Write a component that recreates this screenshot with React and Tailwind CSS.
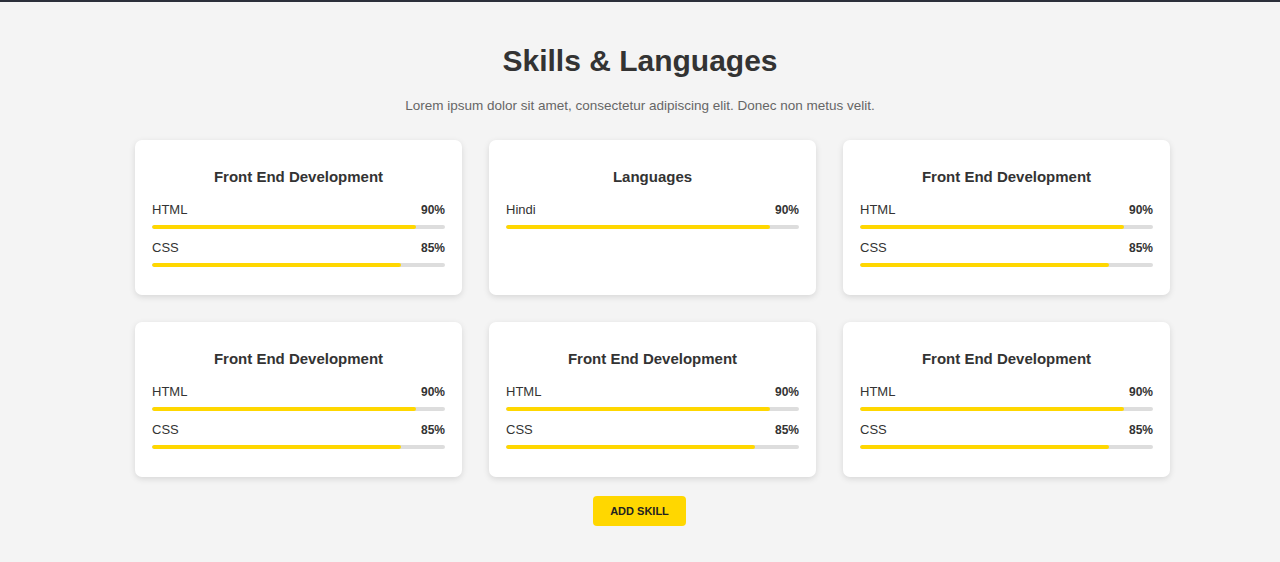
import React from "react";

const cards = [
  { title: "Front End Development", skills: [["HTML", 90], ["CSS", 85]] },
  { title: "Languages", skills: [["Hindi", 90]] },
  { title: "Front End Development", skills: [["HTML", 90], ["CSS", 85]] },
  { title: "Front End Development", skills: [["HTML", 90], ["CSS", 85]] },
  { title: "Front End Development", skills: [["HTML", 90], ["CSS", 85]] },
  { title: "Front End Development", skills: [["HTML", 90], ["CSS", 85]] },
];

function Card({ title, skills }) {
  return (
    <div className="bg-white rounded-[7px] shadow-[0_2px_6px_rgba(0,0,0,0.12)] px-[17px] pt-[27px] pb-[28px]">
      <h3 className="text-center text-[15px] leading-[20px] font-bold text-[#333] mb-[15px]">{title}</h3>
      <div className="flex flex-col gap-[11px]">
        {skills.map(([name, pct], i) => (
          <div key={i}>
            <div className="flex justify-between items-center text-[13px] leading-[16px] text-[#333] mb-[7px]">
              <span>{name}</span>
              <span className="font-bold text-[12px]">{pct}%</span>
            </div>
            <div className="h-[4px] rounded-full bg-[#dddddd] overflow-hidden">
              <div className="h-full rounded-full bg-[#ffd700]" style={{ width: `${pct}%` }} />
            </div>
          </div>
        ))}
      </div>
    </div>
  );
}

export default function App() {
  return (
    <div className="min-h-[562px] bg-[#f4f4f4] border-t-2 border-[#2b2f3a] font-['Liberation_Sans',Arial,sans-serif]">
      <div className="pt-[41px] flex flex-col items-center">
        <h2 className="text-[30px] leading-[36px] font-bold text-[#333] mb-[17px]">Skills &amp; Languages</h2>
        <p className="text-[13.5px] leading-[20px] text-[#666] mb-[24px]">
          Lorem ipsum dolor sit amet, consectetur adipiscing elit. Donec non metus velit.
        </p>
        <div className="self-start ml-[135px] w-[1035px] grid grid-cols-3 gap-[27px]">
          {cards.map((c, i) => (
            <Card key={i} {...c} />
          ))}
        </div>
        <button className="mt-[19px] -ml-[1px] w-[93px] h-[30px] rounded-[4px] bg-[#ffd700] text-[11px] font-bold text-[#222] uppercase">
          Add Skill
        </button>
      </div>
    </div>
  );
}
